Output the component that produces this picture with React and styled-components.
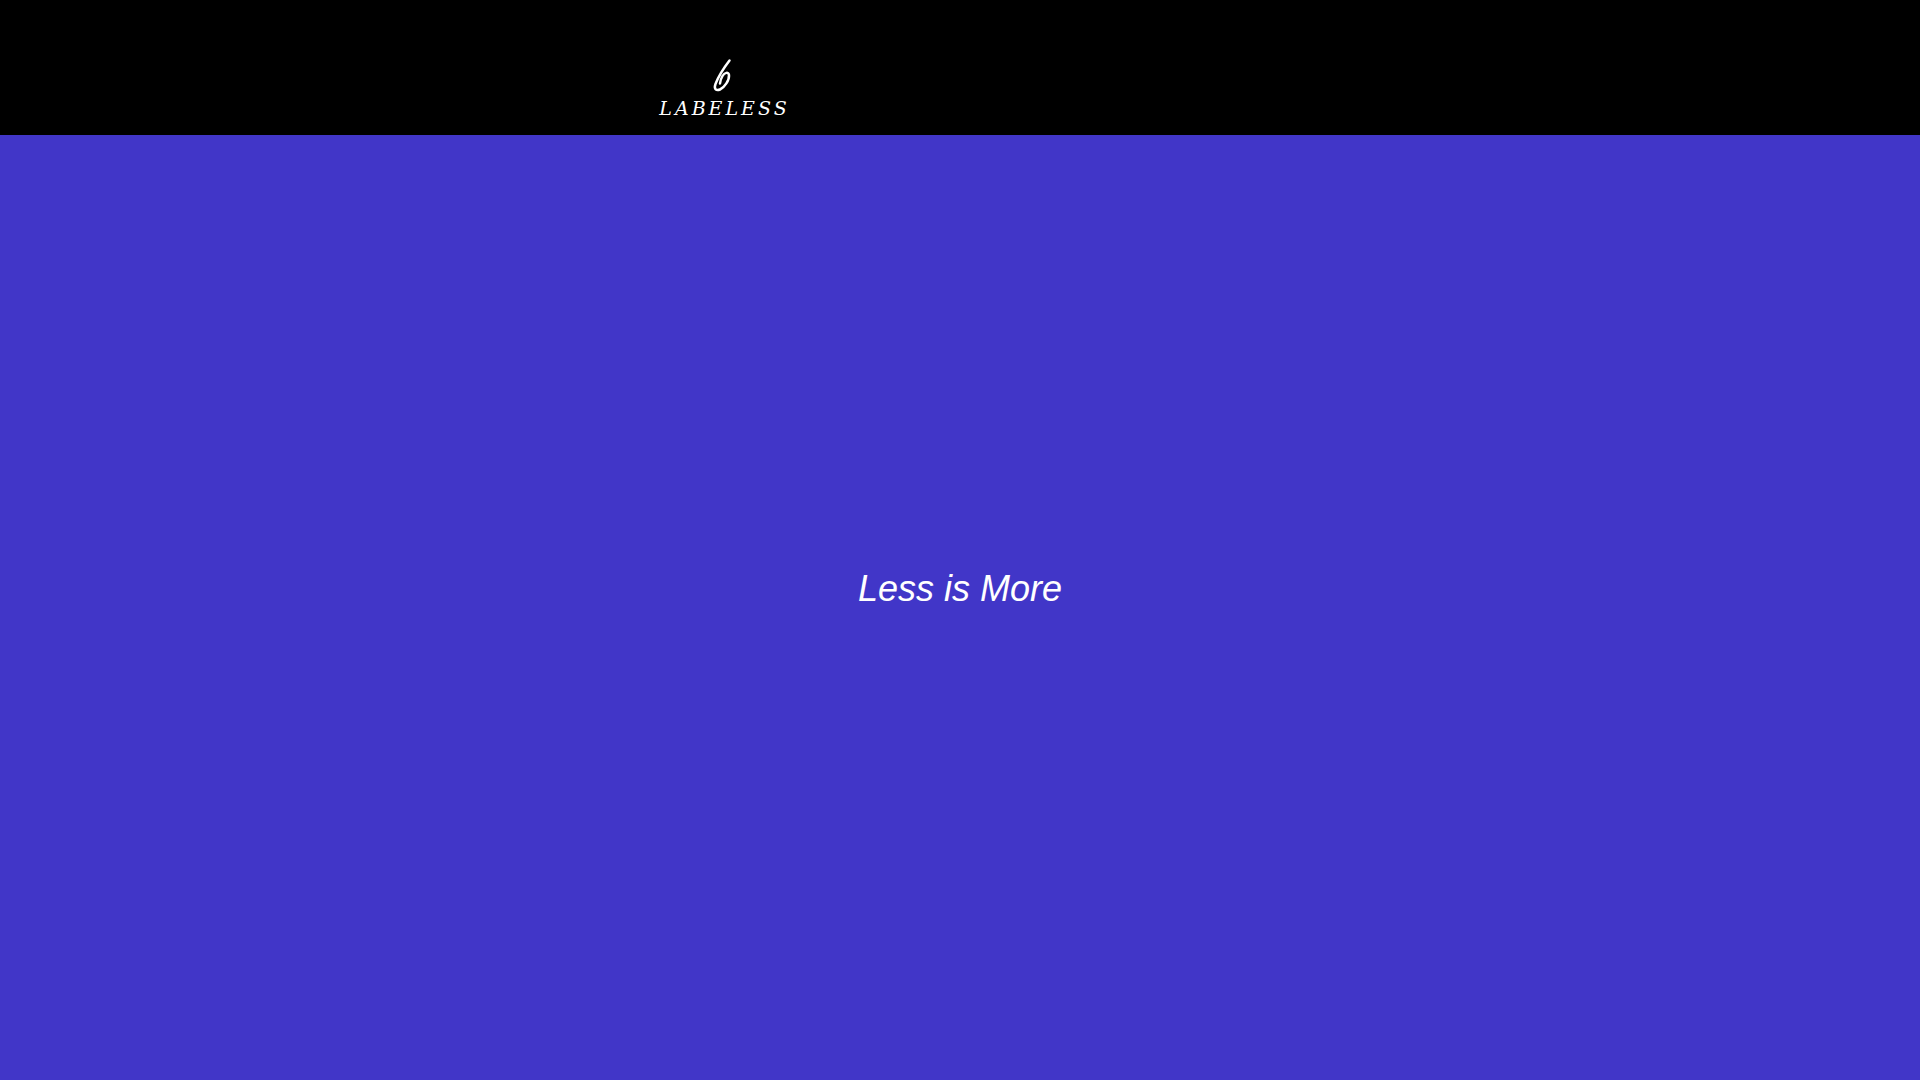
import React from "react";
import styled, { createGlobalStyle } from "styled-components";

const GlobalStyle = createGlobalStyle`
  *, *::before, *::after { box-sizing: border-box; }
  body { margin: 0; background: #4136c8; }
`;

const Page = styled.div`
  display: flex;
  flex-direction: column;
  min-height: 100vh;
`;

const Header = styled.header`
  background: #000;
  padding: 56px 0 15px;
`;

const HeaderInner = styled.div`
  display: grid;
  grid-template-columns: 1fr 1fr;
  max-width: 950px;
  margin: 0 auto;
`;

const Brand = styled.a`
  display: flex;
  flex-direction: column;
  align-items: center;
  color: #fff;
  text-decoration: none;
`;

const Mark = styled.svg`
  display: block;
  width: 24px;
  height: 40px;
`;

const BrandName = styled.span`
  font: italic 19px/24px "DejaVu Serif", Georgia, serif;
  letter-spacing: 3px;
  text-indent: 4px;
`;

const Hero = styled.main`
  flex: 1;
  display: flex;
  align-items: center;
  justify-content: center;
  padding-bottom: 38px;
  background: #4136c8;
`;

const Tagline = styled.h1`
  margin: 0;
  color: #fff;
  font: italic 400 36px/40px "Liberation Sans", Arial, sans-serif;
  text-align: center;
`;

export default function App() {
  return (
    <Page>
      <GlobalStyle />
      <Header>
        <HeaderInner>
          <Brand href="#">
            <Mark viewBox="0 0 24 40" fill="none" stroke="#fff" strokeLinecap="round" strokeLinejoin="round" aria-hidden="true">
              <path strokeWidth="2.5" d="M18.500 4.500C13.500 11 7 21.500 4.500 28C2.500 33.500 5.500 35 9 33.500C13.500 31.500 18.500 24 18 19C17.500 15.500 13.500 16.500 11.500 20C10 22.500 9.200 25 9 27.500" />
            </Mark>
            <BrandName>LABELESS</BrandName>
          </Brand>
        </HeaderInner>
      </Header>
      <Hero>
        <Tagline>Less is More</Tagline>
      </Hero>
    </Page>
  );
}
